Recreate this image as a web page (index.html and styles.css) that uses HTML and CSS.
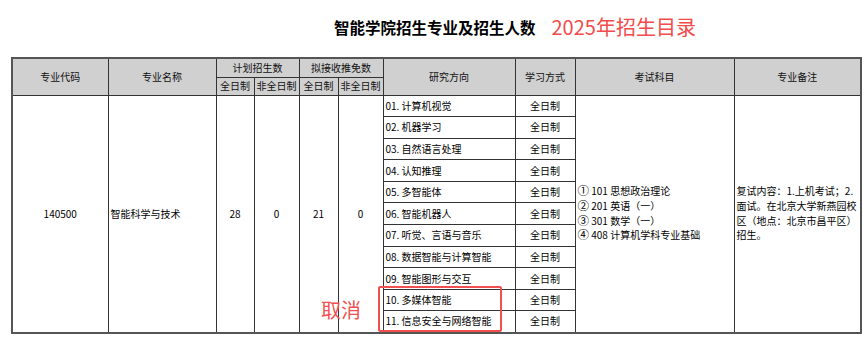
FILE: index.html
```html
<!DOCTYPE html>
<html lang="zh-CN">
<head>
<meta charset="utf-8">
<title>智能学院招生专业及招生人数</title>
<link rel="stylesheet" href="styles.css">
</head>
<body>
<div class="page">
  <div class="title-row">
    <h1 class="title">智能学院招生专业及招生人数</h1>
    <span class="year">2025年招生目录</span>
  </div>
  <div class="table-wrap">
    <table class="plan">
      <colgroup>
        <col class="c1"><col class="c2"><col class="c3"><col class="c4"><col class="c5">
        <col class="c6"><col class="c7"><col class="c8"><col class="c9"><col class="c10">
      </colgroup>
      <thead>
        <tr class="h1">
          <th rowspan="2">专业代码</th>
          <th rowspan="2">专业名称</th>
          <th colspan="2">计划招生数</th>
          <th colspan="2">拟接收推免数</th>
          <th rowspan="2">研究方向</th>
          <th rowspan="2">学习方式</th>
          <th rowspan="2">考试科目</th>
          <th rowspan="2">专业备注</th>
        </tr>
        <tr class="h2">
          <th>全日制</th>
          <th>非全日制</th>
          <th>全日制</th>
          <th>非全日制</th>
        </tr>
      </thead>
      <tbody>
        <tr>
          <td rowspan="11" class="center">140500</td>
          <td rowspan="11" class="left">智能科学与技术</td>
          <td rowspan="11" class="center">28</td>
          <td rowspan="11" class="center">0</td>
          <td rowspan="11" class="center">21</td>
          <td rowspan="11" class="center">0</td>
          <td class="dir">01. 计算机视觉</td>
          <td class="center">全日制</td>
          <td rowspan="11" class="multi"><span class="num">①</span> 101 思想政治理论<br><span class="num">②</span> 201 英语（一）<br><span class="num">③</span> 301 数学（一）<br><span class="num">④</span> 408 计算机学科专业基础</td>
          <td rowspan="11" class="multi">复试内容：1.上机考试；2.<br>面试。在北京大学新燕园校<br>区（地点：北京市昌平区）<br>招生。</td>
        </tr>
        <tr><td class="dir">02. 机器学习</td><td class="center">全日制</td></tr>
        <tr><td class="dir">03. 自然语言处理</td><td class="center">全日制</td></tr>
        <tr><td class="dir">04. 认知推理</td><td class="center">全日制</td></tr>
        <tr><td class="dir">05. 多智能体</td><td class="center">全日制</td></tr>
        <tr><td class="dir">06. 智能机器人</td><td class="center">全日制</td></tr>
        <tr><td class="dir">07. 听觉、言语与音乐</td><td class="center">全日制</td></tr>
        <tr><td class="dir">08. 数据智能与计算智能</td><td class="center">全日制</td></tr>
        <tr><td class="dir">09. 智能图形与交互</td><td class="center">全日制</td></tr>
        <tr><td class="dir">10. 多媒体智能</td><td class="center">全日制</td></tr>
        <tr><td class="dir">11. 信息安全与网络智能</td><td class="center">全日制</td></tr>
      </tbody>
    </table>
    <div class="cancel-box"></div>
    <div class="cancel-label">取消</div>
  </div>
</div>
</body>
</html>
```
FILE: styles.css
```css
* { box-sizing: border-box; }
html, body { margin: 0; padding: 0; background: #fff; }
body {
  font-family: "Noto Sans CJK SC", "Noto Sans", sans-serif;
  color: #000;
}
.page {
  width: 867px;
  height: 347px;
  padding: 16px 0 0 11px;
  overflow: hidden;
}
.title-row {
  display: flex;
  align-items: center;
  gap: 16px;
  padding-left: 323px;
  height: 22px;
}
.title {
  margin: 0;
  font-size: 15.5px;
  font-weight: 700;
  line-height: 22px;
  color: #000;
}
.year {
  font-size: 20px;
  line-height: 22px;
  color: #f24b4b;
  font-weight: 400;
}
.table-wrap {
  position: relative;
  margin-top: 19px;
  width: 850px;
}
.plan {
  border-collapse: collapse;
  table-layout: fixed;
  width: 850px;
  font-size: 10px;
  line-height: 14px;
  border: 2px solid #555;
  color: #000;
}
.c1 { width: 96px; }
.c2 { width: 108px; }
.c3 { width: 38px; }
.c4 { width: 45px; }
.c5 { width: 39px; }
.c6 { width: 45px; }
.c7 { width: 132px; }
.c8 { width: 60px; }
.c9 { width: 159px; }
.c10 { width: 127px; }
.plan th, .plan td {
  border: 1px solid #333;
  padding: 0 2px;
  white-space: nowrap;
  overflow: hidden;
}
.plan th {
  background: #d0d0d0;
  font-weight: 400;
  text-align: center;
  vertical-align: middle;
  color: #111;
}
.h1 { height: 19px; }
.h2 { height: 18px; }
.plan tbody tr { height: 21.6px; }
.plan td { vertical-align: middle; }
.center { text-align: center; }
.left { text-align: left; }
.dir { text-align: left; padding-left: 2px; }
.multi {
  text-align: left;
  line-height: 14.7px;
  padding-left: 2px;
}
.num {
  font-size: 11.5px;
  line-height: 10px;
}
.cancel-box {
  position: absolute;
  left: 367px;
  top: 229px;
  width: 124px;
  height: 46px;
  border: 2px solid #f05050;
  border-radius: 2px;
}
.cancel-label {
  position: absolute;
  left: 310px;
  top: 240px;
  font-size: 20px;
  line-height: 26px;
  color: #f05050;
}
```
